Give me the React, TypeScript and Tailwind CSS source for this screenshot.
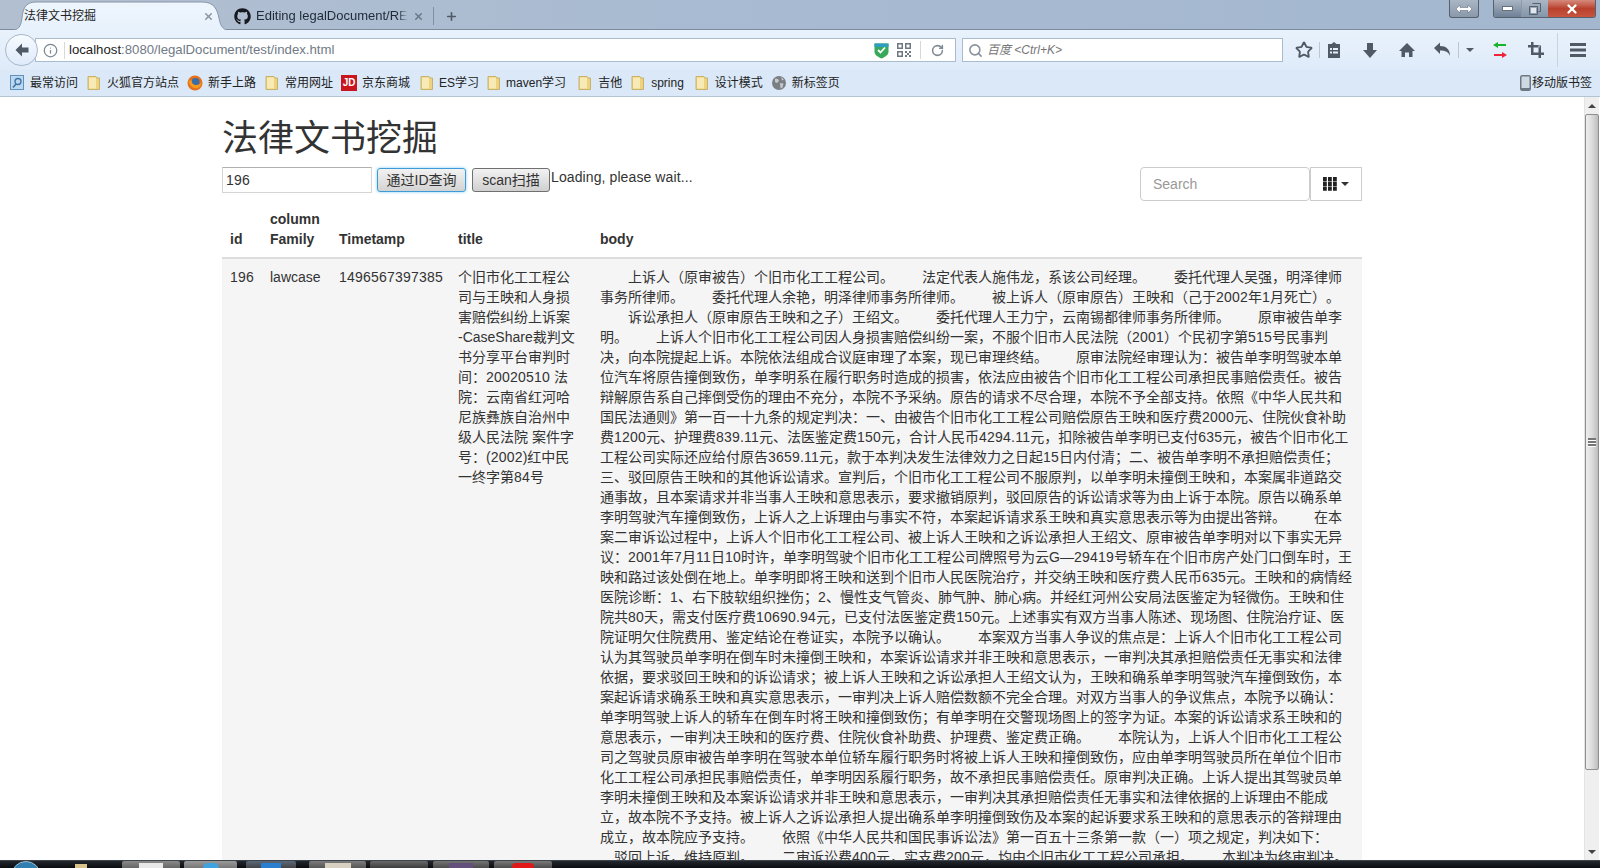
import { Info, Search, Star, RotateCw, X, Plus } from "lucide-react";
import { FaGithub } from "react-icons/fa";

const bodyLines = [
  "　　上诉人（原审被告）个旧市化工工程公司。　　法定代表人施伟龙，系该公司经理。　　委托代理人吴强，明泽律师",
  "事务所律师。　　委托代理人余艳，明泽律师事务所律师。　　被上诉人（原审原告）王映和（己于2002年1月死亡）。",
  "　　诉讼承担人（原审原告王映和之子）王绍文。　　委托代理人王力宁，云南锡都律师事务所律师。　　原审被告单李",
  "明。　　上诉人个旧市化工工程公司因人身损害赔偿纠纷一案，不服个旧市人民法院（2001）个民初字第515号民事判",
  "决，向本院提起上诉。本院依法组成合议庭审理了本案，现已审理终结。　　原审法院经审理认为：被告单李明驾驶本单",
  "位汽车将原告撞倒致伤，单李明系在履行职务时造成的损害，依法应由被告个旧市化工工程公司承担民事赔偿责任。被告",
  "辩解原告系自己摔倒受伤的理由不充分，本院不予采纳。原告的请求不尽合理，本院不予全部支持。依照《中华人民共和",
  "国民法通则》第一百一十九条的规定判决：一、由被告个旧市化工工程公司赔偿原告王映和医疗费2000元、住院伙食补助",
  "费1200元、护理费839.11元、法医鉴定费150元，合计人民币4294.11元，扣除被告单李明已支付635元，被告个旧市化工",
  "工程公司实际还应给付原告3659.11元，款于本判决发生法律效力之日起15日内付清；二、被告单李明不承担赔偿责任；",
  "三、驳回原告王映和的其他诉讼请求。宣判后，个旧市化工工程公司不服原判，以单李明未撞倒王映和，本案属非道路交",
  "通事故，且本案请求并非当事人王映和意思表示，要求撤销原判，驳回原告的诉讼请求等为由上诉于本院。原告以确系单",
  "李明驾驶汽车撞倒致伤，上诉人之上诉理由与事实不符，本案起诉请求系王映和真实意思表示等为由提出答辩。　　在本",
  "案二审诉讼过程中，上诉人个旧市化工工程公司、被上诉人王映和之诉讼承担人王绍文、原审被告单李明对以下事实无异",
  "议：2001年7月11日10时许，单李明驾驶个旧市化工工程公司牌照号为云G—29419号轿车在个旧市房产处门口倒车时，王",
  "映和路过该处倒在地上。单李明即将王映和送到个旧市人民医院治疗，并交纳王映和医疗费人民币635元。王映和的病情经",
  "医院诊断：1、右下肢软组织挫伤；2、慢性支气管炎、肺气肿、肺心病。并经红河州公安局法医鉴定为轻微伤。王映和住",
  "院共80天，需支付医疗费10690.94元，已支付法医鉴定费150元。上述事实有双方当事人陈述、现场图、住院治疗证、医",
  "院证明欠住院费用、鉴定结论在卷证实，本院予以确认。　　本案双方当事人争议的焦点是：上诉人个旧市化工工程公司",
  "认为其驾驶员单李明在倒车时未撞倒王映和，本案诉讼请求并非王映和意思表示，一审判决其承担赔偿责任无事实和法律",
  "依据，要求驳回王映和的诉讼请求；被上诉人王映和之诉讼承担人王绍文认为，王映和确系单李明驾驶汽车撞倒致伤，本",
  "案起诉请求确系王映和真实意思表示，一审判决上诉人赔偿数额不完全合理。对双方当事人的争议焦点，本院予以确认：",
  "单李明驾驶上诉人的轿车在倒车时将王映和撞倒致伤；有单李明在交警现场图上的签字为证。本案的诉讼请求系王映和的",
  "意思表示，一审判决王映和的医疗费、住院伙食补助费、护理费、鉴定费正确。　　本院认为，上诉人个旧市化工工程公",
  "司之驾驶员原审被告单李明在驾驶本单位轿车履行职务时将被上诉人王映和撞倒致伤，应由单李明驾驶员所在单位个旧市",
  "化工工程公司承担民事赔偿责任，单李明因系履行职务，故不承担民事赔偿责任。原审判决正确。上诉人提出其驾驶员单",
  "李明未撞倒王映和及本案诉讼请求并非王映和意思表示，一审判决其承担赔偿责任无事实和法律依据的上诉理由不能成",
  "立，故本院不予支持。被上诉人之诉讼承担人提出确系单李明撞倒致伤及本案的起诉要求系王映和的意思表示的答辩理由",
  "成立，故本院应予支持。　　依照《中华人民共和国民事诉讼法》第一百五十三条第一款（一）项之规定，判决如下：",
  "　驳回上诉，维持原判。　　二审诉讼费400元，实支费200元，均由个旧市化工工程公司承担。　　本判决为终审判决。",
];

const titleLines = [
  "个旧市化工工程公",
  "司与王映和人身损",
  "害赔偿纠纷上诉案",
  "-CaseShare裁判文",
  "书分享平台审判时",
  "间：20020510 法",
  "院：云南省红河哈",
  "尼族彝族自治州中",
  "级人民法院 案件字",
  "号：(2002)红中民",
  "一终字第84号",
];

// digits in the screenshot sit on whole pixels, a little wider than here
const Line = ({ text }: { text: string }) => (
  <div className="whitespace-nowrap">
    {text.split(/([0-9.]+)/).map((part, i) =>
      i % 2 === 1 ? (
        <span key={i} className="tracking-[0.214px]">{part}</span>
      ) : (
        part
      )
    )}
  </div>
);

const Folder = () => (
  <svg width="14" height="16" viewBox="0 0 14 16" className="shrink-0">
    <path d="M1 1.500h8l1 1.500h2.500v11.500H1z" fill="#eed27e" stroke="#bfa65c" strokeWidth="0.800" />
    <path d="M2 2.500h7v11H2z" fill="#f8eab4" />
  </svg>
);

const Firefox = () => (
  <svg width="16" height="16" viewBox="0 0 16 16" className="shrink-0">
    <circle cx="8" cy="8" r="7.500" fill="#e8701c" />
    <circle cx="8.500" cy="7" r="4" fill="#3a6ea8" />
    <path d="M1.500 6c1 5 5 8 9 7 2.500-.6 4-3 4-6-1 2-3 3-5 3-3 0-5-2-5-5z" fill="#f39a1f" />
  </svg>
);

const Globe = () => (
  <svg width="14" height="14" viewBox="0 0 14 14" className="shrink-0">
    <circle cx="7" cy="7" r="7" fill="#7b7f84" />
    <path d="M3 2.500l3 .5 1 2-2 2-2-1zM8 7l3.500.5-1 4-2 1zM9 1l3 2.500-2 1z" fill="#c5c9cd" />
  </svg>
);

const Recent = () => (
  <svg width="14" height="16" viewBox="0 0 14 16" className="shrink-0">
    <rect x="0.500" y="0.500" width="13" height="14" fill="#bcd7ee" stroke="#5f92bf" />
    <circle cx="8" cy="6.500" r="3" fill="none" stroke="#3a74a8" strokeWidth="1.300" />
    <path d="M6 9l-3 3.500" stroke="#3a74a8" strokeWidth="1.600" />
  </svg>
);

const Jd = () => (
  <span className="flex h-4 w-4 shrink-0 items-center justify-center bg-[#c9151e] text-[10px] font-bold text-white">JD</span>
);

const bookmarks = [
  { icon: <Recent />, label: "最常访问", cls: "gap-[6px]" },
  { icon: <Folder />, label: "火狐官方站点", cls: "gap-[6px] ml-[9px]" },
  { icon: <Firefox />, label: "新手上路", cls: "gap-[5px] ml-[8px]" },
  { icon: <Folder />, label: "常用网址", cls: "gap-[6px] ml-[9px]" },
  { icon: <Jd />, label: "京东商城", cls: "gap-[5px] ml-[8px]" },
  { icon: <Folder />, label: "ES学习", cls: "gap-[5px] ml-[10px]" },
  { icon: <Folder />, label: "maven学习", cls: "gap-[5px] ml-[8px]" },
  { icon: <Folder />, label: "吉他", cls: "gap-[6px] ml-[12px]" },
  { icon: <Folder />, label: "spring", cls: "gap-[6px] ml-[9px]" },
  { icon: <Folder />, label: "设计模式", cls: "gap-[6px] ml-[11px]" },
  { icon: <Globe />, label: "新标签页", cls: "gap-[6px] ml-[9px]" },
];

const ToolIcon = ({ d, className = "" }: { d: string; className?: string }) => (
  <svg width="18" height="18" viewBox="0 0 18 18" className={className}>
    <path d={d} fill="#4f5a66" fillRule="evenodd" />
  </svg>
);

const TitleBar = () => (
  <div className="relative flex h-[30px] shrink-0 items-end border-b border-[#7d8b9b] bg-gradient-to-r from-[#b2bfd0] via-[#a7bad2] to-[#a3b7cf] pl-[14px]">
    <div className="relative flex h-[28px] w-[213px] shrink-0 items-center pl-[10px] pr-[10px] pt-[2px] text-[12px] text-[#222]">
      <svg width="213" height="29" viewBox="0 0 213 29" className="absolute left-0 top-0">
        <defs>
          <linearGradient id="tabFill" x1="0" y1="0" x2="0" y2="1">
            <stop offset="0" stopColor="#eef5fd" />
            <stop offset="1" stopColor="#e8f2fc" />
          </linearGradient>
        </defs>
        <path d="M0 29C6 28 7 23 8 17 9 8 11 1 22 1H188C200 1 203 8 205 17 206 23 208 28 213 29" fill="url(#tabFill)" stroke="#8797a8" strokeWidth="1" />
      </svg>
      <span className="relative flex-1 text-[12px]">法律文书挖掘</span>
      <X size={11} strokeWidth={3.500} className="relative mr-[3px] text-[#8f98a3]" />
    </div>
    <div className="flex h-[28px] shrink-0 items-center pl-[7px] pt-[2px] text-[#1e2a38]">
      <FaGithub size={17} className="shrink-0 text-[#16191d]" />
      <span className="ml-[5px] shrink-0 whitespace-nowrap text-[13px] [mask-image:linear-gradient(to_right,black_93%,transparent)]">Editing legalDocument/RE</span>
      <X size={11} strokeWidth={3.500} className="ml-[5px] shrink-0 text-[#6c7a8a]" />
      <span className="ml-[9px] h-[18px] w-px bg-[#7f8fa2]" />
      <Plus size={13} strokeWidth={3} className="ml-[11px] text-[#4f5a66]" />
    </div>
    <div className="ml-auto flex items-start self-start pr-[4px]">
      <div className="mr-[14px] flex h-[18px] w-[30px] items-center justify-center rounded-b-[3px] border border-t-0 border-[#56616e] bg-gradient-to-b from-[#aab6c4] to-[#8a99aa]">
        <svg width="18" height="10" viewBox="0 0 18 10">
          <path d="M1 5l4-4v2.500h8V1l4 4-4 4V6.500H5V9z" fill="#fff" stroke="#5a6675" strokeWidth="0.500" />
        </svg>
      </div>
      <div className="flex h-[18px] overflow-hidden rounded-b-[3px] border border-t-0 border-[#56616e]">
        <div className="flex w-[28px] items-center justify-center border-r border-[#8d99a6] bg-gradient-to-b from-[#aab6c4] to-[#6f8197]">
          <span className="h-[5px] w-[11px] border border-[#67717d] bg-white" />
        </div>
        <div className="flex w-[26px] items-center justify-center bg-gradient-to-b from-[#aab6c4] to-[#8496aa]">
          <svg width="12" height="12" viewBox="0 0 12 12">
            <path d="M3.500 0.500h8v8h-2M0.500 3.500h8v8h-8z" fill="none" stroke="#55606c" strokeWidth="1" />
            <path d="M2 5h5v5H2z" fill="#dfe6ee" />
          </svg>
        </div>
        <div className="flex w-[47px] items-center justify-center bg-gradient-to-b from-[#d58a7c] via-[#b9402c] to-[#c6553f]">
          <X size={14} strokeWidth={4} className="text-white" />
        </div>
      </div>
    </div>
  </div>
);

const NavBar = () => (
  <div className="flex h-[40px] shrink-0 items-center bg-gradient-to-b from-[#e8f2fc] to-[#dfebf9] pl-[5px]">
    <div className="z-10 flex h-[32px] w-[33px] items-center justify-center rounded-full border border-[#a7b8cb] bg-gradient-to-b from-[#f7fbff] to-[#dfeafa]">
      <svg width="16" height="16" viewBox="0 0 16 16">
        <path d="M8 1.500L1.500 8 8 14.500V10.500h6.500v-5H8z" fill="#4f5a66" />
      </svg>
    </div>
    <div className="-ml-[3px] flex h-[24px] w-[921px] items-center border border-[#a9bbce] bg-white text-[13.200px]">
      <Info size={15} className="ml-[7px] text-[#7c8792]" />
      <span className="ml-[6px] h-[17px] w-px bg-[#d4d9df]" />
      <span className="ml-[4px] text-[#222]">localhost</span>
      <span className="text-[#6f7a86]">:8080/legalDocument/test/index.html</span>
      <svg width="15" height="17" viewBox="0 0 15 17" className="ml-auto">
        <path d="M0.500 1.500h14V10c0 3-3.500 5-7 6.500C4 15 0.500 13 0.500 10z" fill="#38a85a" />
        <path d="M0.500 1.500h14V5H0.500z" fill="#2d9ec0" />
        <path d="M4 8l2.500 2.500L11 5.500" fill="none" stroke="#fff" strokeWidth="1.800" />
      </svg>
      <svg width="14" height="14" viewBox="0 0 14 14" className="ml-[8px]">
        <path d="M0 0h6v6H0zM1.500 1.500v3h3v-3zM8 0h6v6H8zM9.500 1.500v3h3v-3zM0 8h6v6H0zM1.500 9.500v3h3v-3zM8 8h2v2H8zM12 8h2v2h-2zM10 10h2v2h-2zM8 12h2v2H8zM12 12h2v2h-2z" fill="#6d7884" fillRule="evenodd" />
      </svg>
      <span className="ml-[9px] h-[18px] w-px bg-[#d4d9df]" />
      <RotateCw size={13} strokeWidth={2.800} className="ml-[10px] mr-[11px] text-[#7e8994]" />
    </div>
    <div className="ml-[6px] flex h-[24px] w-[321px] items-center border border-[#a9bbce] bg-white">
      <Search size={15} strokeWidth={2.500} className="ml-[5px] text-[#8a939d]" />
      <span className="ml-[4px] text-[12px] italic text-[#777]">百度 &lt;Ctrl+K&gt;</span>
    </div>
    <Star size={18} strokeWidth={2.500} className="ml-[12px] text-[#4f5a66]" />
    <span className="ml-[6px] h-[16px] w-px bg-[#b9c6d4]" />
    <ToolIcon className="ml-[5px]" d="M3 3h3.500L9 1l2.500 2H15v14H3zM5 7v2h2V7zM8 7v2h5V7zM5 10.500v2h2v-2zM8 10.500v2h5v-2z" />
    <ToolIcon className="ml-[18px]" d="M6 2h6v7h4l-7 8-7-8h4z" />
    <ToolIcon className="ml-[19px]" d="M9 2l8 8h-2.500v6H11v-4.500H7V16H3.500v-6H1z" />
    <svg width="18" height="18" viewBox="0 0 18 18" className="ml-[17px]">
      <path d="M1 7l6-5.500V5c6 0 10 3 10 10-1.500-4-4.500-5.500-10-5.500V13z" fill="#4f5a66" />
    </svg>
    <span className="ml-[7px] h-[16px] w-px bg-[#b9c6d4]" />
    <span className="ml-[7px] h-0 w-0 border-x-[4px] border-t-[4px] border-x-transparent border-t-[#4f5a66]" />
    <svg width="14" height="18" viewBox="0 0 14 18" className="ml-[19px]">
      <path d="M5 1L0 4l5 3V5h8V3H5z" fill="#17b32a" />
      <path d="M9 11l5 3-5 3v-2H1v-2h8z" fill="#f0233a" />
    </svg>
    <svg width="16" height="16" viewBox="0 0 16 16" className="ml-[21px]">
      <path d="M3 0h2.500v3h6V5.500H5.500v5h5V3.500H13v7h3V13h-3v3h-2.500v-3H3V5.500H0V3h3z" fill="#4f5a66" fillRule="evenodd" />
    </svg>
    <span className="ml-[13px] h-[34px] w-px bg-[#c7d3e0]" />
    <svg width="18" height="14" viewBox="0 0 18 14" className="ml-[12px]">
      <path d="M0 0h16v3H0zM0 5.500h16v3H0zM0 11h16v3H0z" fill="#4f5a66" />
    </svg>
  </div>
);

const BookmarksBar = () => (
  <div className="flex h-[27px] shrink-0 items-center border-b border-[#b4c4d6] bg-[#dae8f8] pb-[1px] pl-[10px] pr-[8px] text-[12px] text-[#222]">
    <div className="flex items-center">
      {bookmarks.map((b) => (
        <div key={b.label} className={`flex items-center ${b.cls}`}>
          {b.icon}
          <span>{b.label}</span>
        </div>
      ))}
    </div>
    <div className="ml-auto flex items-center gap-[1px]">
      <svg width="11" height="16" viewBox="0 0 11 16">
        <rect x="0.750" y="0.750" width="9.500" height="14.500" rx="1.500" fill="#cfd9e3" stroke="#6d7883" strokeWidth="1.500" />
        <path d="M1 13h9v2H1z" fill="#6d7883" />
      </svg>
      <span>移动版书签</span>
    </div>
  </div>
);

const Th = ({ children }: { children: React.ReactNode }) => (
  <th className="border-b-2 border-[#ddd] p-[8px] text-left align-bottom font-bold">{children}</th>
);

const Content = () => (
  <div className="min-w-0 flex-1 overflow-hidden bg-white px-[222px] text-[14px] leading-[20px] text-[#333]">
    <div className="w-[1140px]">
      <h1 className="mt-[22px] mb-[8px] text-[36px] font-normal leading-[40px]">法律文书挖掘</h1>
      <div className="flex h-[34px] items-start">
        <div className="flex items-start">
          <input readOnly value="196" className="h-[26px] w-[150px] border border-[#d5d5d5] border-t-[#b0b0b0] bg-white px-[3px] text-[14px] tracking-[0.214px] outline-none" />
          <button className="ml-[5px] mt-[1px] h-[24px] w-[89px] rounded-[3px] border border-[#3d9bd8] bg-gradient-to-b from-[#f2f2f2] to-[#d3d3d3] text-[14px] shadow-[0_0_3px_#7ecbf5]">通过ID查询</button>
          <button className="ml-[6px] mt-[1px] h-[24px] w-[78px] rounded-[3px] border border-[#707070] bg-gradient-to-b from-[#f2f2f2] to-[#d0d0d0] text-[14px]">scan扫描</button>
          <span className="ml-[1px] text-[14px] leading-[20px] tracking-[0.1px]">Loading, please wait...</span>
        </div>
        <div className="ml-auto flex">
          <input readOnly placeholder="Search" className="h-[34px] w-[170px] rounded-[4px] border border-[#ccc] bg-white px-[12px] text-[14px] outline-none placeholder:text-[#999]" />
          <button className="flex h-[34px] w-[52px] items-center justify-center gap-[4px] border border-[#ccc] bg-white">
            <svg width="14" height="14" viewBox="0 0 14 14">
              <path d="M0 0h3.800v4.200H0zM5 0h3.800v4.200H5zM10 0h3.800v4.200H10zM0 4.800h3.800v4.200H0zM5 4.800h3.800v4.200H5zM10 4.800h3.800v4.200H10zM0 9.600h3.800v4.200H0zM5 9.600h3.800v4.200H5zM10 9.600h3.800v4.200H10z" fill="#222" />
            </svg>
            <span className="h-0 w-0 border-x-[4px] border-t-[4px] border-x-transparent border-t-[#333]" />
          </button>
        </div>
      </div>
      <table className="w-[1140px] table-fixed border-collapse">
        <colgroup>
          <col className="w-[40px]" />
          <col className="w-[69px]" />
          <col className="w-[119px]" />
          <col className="w-[142px]" />
          <col className="w-[770px]" />
        </colgroup>
        <thead>
          <tr>
            <Th>id</Th>
            <Th>column<br />Family</Th>
            <Th>Timetamp</Th>
            <Th>title</Th>
            <Th>body</Th>
          </tr>
        </thead>
        <tbody>
          <tr className="bg-[#f5f5f5]">
            <td className="p-[8px] align-top tracking-[0.214px]">196</td>
            <td className="p-[8px] align-top">lawcase</td>
            <td className="p-[8px] align-top tracking-[0.214px]">1496567397385</td>
            <td className="p-[8px] align-top">
              {titleLines.map((l) => (
                <Line key={l} text={l} />
              ))}
            </td>
            <td className="p-[8px] align-top">
              {bodyLines.map((l) => (
                <Line key={l} text={l} />
              ))}
            </td>
          </tr>
        </tbody>
      </table>
    </div>
  </div>
);

const Scrollbar = () => (
  <div className="mr-px flex w-[15px] shrink-0 flex-col border-l border-[#e4e4e4] bg-[#efefef]">
    <div className="flex h-[17px] shrink-0 items-center justify-center">
      <span className="h-0 w-0 border-x-[4px] border-b-[4px] border-x-transparent border-b-[#444]" />
    </div>
    <div className="flex h-[656px] shrink-0 flex-col items-center justify-center gap-[1px] rounded-[2px] border border-[#8f8f8f] bg-gradient-to-r from-[#eeeeee] via-[#dcdcdc] to-[#bdbdbd]">
      <span className="h-[2px] w-[8px] bg-[#777] shadow-[0_1px_0_#fff]" />
      <span className="h-[2px] w-[8px] bg-[#777] shadow-[0_1px_0_#fff]" />
      <span className="h-[2px] w-[8px] bg-[#777] shadow-[0_1px_0_#fff]" />
    </div>
    <div className="mt-auto flex h-[17px] shrink-0 items-center justify-center">
      <span className="h-0 w-0 border-x-[4px] border-t-[4px] border-x-transparent border-t-[#444]" />
    </div>
  </div>
);

const taskButtons = [
  { cls: "w-[58px] ml-[122px] from-[#8a8a8a] to-[#666]", spot: "bg-[#e8e8e8] w-[24px]" },
  { cls: "w-[53px] ml-[4px] from-[#9a9a9a] to-[#777]", spot: "bg-[#3ea3e0] w-[16px] rounded-t-full" },
  { cls: "w-[50px] ml-[9px] from-[#5a6a7c] to-[#444]", spot: "bg-[#2a7fd0] w-[20px]" },
  { cls: "w-[57px] ml-[13px] from-[#7d7d7d] to-[#555]", spot: "bg-[#d8d0c0] w-[26px]" },
  { cls: "w-[58px] ml-[4px] from-[#6a6a6a] to-[#3c3c3c]", spot: "bg-transparent w-[20px]" },
  { cls: "w-[56px] ml-[5px] from-[#757575] to-[#4c4c4c]", spot: "bg-[#64507c] w-[24px]" },
  { cls: "w-[58px] ml-[5px] from-[#7a7a7a] to-[#4c4c4c]", spot: "bg-[#e01818] w-[22px] rounded-t-[4px]" },
];

const Taskbar = () => (
  <div className="relative flex h-[8px] shrink-0 items-end overflow-hidden border-t border-[#3e444b] bg-gradient-to-b from-[#23282e] to-[#0a0c0f]">
    <span className="absolute left-[11px] top-[0px] h-[30px] w-[30px] rounded-full border border-[#9dbcd2] bg-[#2f7fb0]" />
    <span className="absolute left-[75px] top-[3px] h-[5px] w-[12px] bg-[#d9c48c]" />
    {taskButtons.map((b) => (
      <span key={b.cls} className={`flex h-[7px] justify-center rounded-t-[2px] bg-gradient-to-b ${b.cls}`}>
        <span className={`mt-[2px] h-[5px] ${b.spot}`} />
      </span>
    ))}
  </div>
);

export default function App() {
  return (
    <div className="flex h-[868px] w-[1600px] flex-col overflow-hidden bg-white font-['Liberation_Sans','Noto_Sans_CJK_SC',sans-serif] [text-spacing-trim:space-all]">
      <TitleBar />
      <NavBar />
      <BookmarksBar />
      <div className="flex min-h-0 flex-1">
        <Content />
        <Scrollbar />
      </div>
      <Taskbar />
    </div>
  );
}
